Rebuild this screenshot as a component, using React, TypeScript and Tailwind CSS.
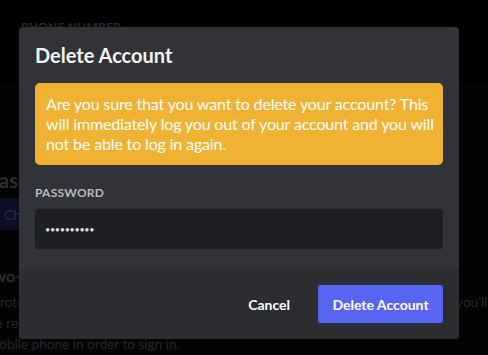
import React from "react";

export default function App() {
  const font = { fontFamily: 'Lato, "Noto Sans", sans-serif' };
  return (
    <div className="relative w-[488px] h-[355px] overflow-hidden bg-[#030304]" style={font}>
      {/* background page (dimmed) */}
      <div className="absolute inset-0 flex flex-col">
        <div className="h-[89px] bg-[#000000] pl-[21px] pt-[19px]">
          <div className="text-[12px] font-bold uppercase leading-[16px] text-[#2a2b2e] tracking-[0.02em]">Phone Number</div>
        </div>
        <div className="flex-1 flex flex-col ml-[-13px]">
          <div className="mt-[84px] text-[20px] font-bold leading-[24px] text-[#2c2d30] whitespace-nowrap">Password and Authentication</div>
          <div className="mt-[6px] ml-[1px] w-[160px] h-[32px] bg-[#0c0e25] rounded-[3px] flex items-center pl-[16px] text-[14px] text-[#2b2e4a]">Change Password</div>
          <div className="mt-[36px] ml-[-2px] text-[16px] font-bold leading-[20px] text-[#2c2d30] whitespace-nowrap">Two-factor authentication</div>
          <div className="mt-[6px] ml-[5px] text-[13.6px] leading-[21px] text-[#26272a] whitespace-nowrap">
            Protect your Discord account with an extra layer of security. Once configured, you'll
            <br />
            <span className="ml-[-4px]">be required to enter both your password and an authentication code from your</span>
            <br />
            <span className="ml-[-4px]">mobile phone in order to sign in.</span>
          </div>
        </div>
      </div>

      {/* modal */}
      <div className="absolute left-[19px] top-[27px] w-[440px] rounded-[4px] bg-[#313338] overflow-hidden flex flex-col shadow-[0_0_0_1px_rgba(0,0,0,0.3)]">
        <div className="px-4 pt-4 pb-5 flex flex-col">
          <h1 className="text-[20px] font-bold leading-[24px] text-[#f2f3f5]">Delete Account</h1>
          <div className="mt-4 rounded-[5px] bg-[#f0b232] p-[11px] text-[16px] leading-[20px] text-white tracking-[-0.15px] whitespace-nowrap">
            Are you sure that you want to delete your account? This
            <br />
            will immediately log you out of your account and you will
            <br />
            not be able to log in again.
          </div>
          <div className="mt-5 text-[12px] font-bold uppercase leading-[16px] text-[#b5bac1] tracking-[0.02em]">Password</div>
          <div className="mt-2 h-[40px] rounded-[3px] bg-[#1e1f22] flex items-center px-[10px] text-[#dbdee1]">
            <span className="text-[9px] tracking-[-0.3px] leading-none">••••••••••</span>
          </div>
        </div>
        <div className="h-[70px] bg-[#2b2d31] flex items-center justify-end p-4">
          <button className="h-[38px] px-4 mr-[12px] text-[14px] font-bold text-white">Cancel</button>
          <button className="h-[38px] w-[125px] rounded-[3px] bg-[#5865f2] text-[14px] font-bold text-white">Delete Account</button>
        </div>
      </div>
    </div>
  );
}
